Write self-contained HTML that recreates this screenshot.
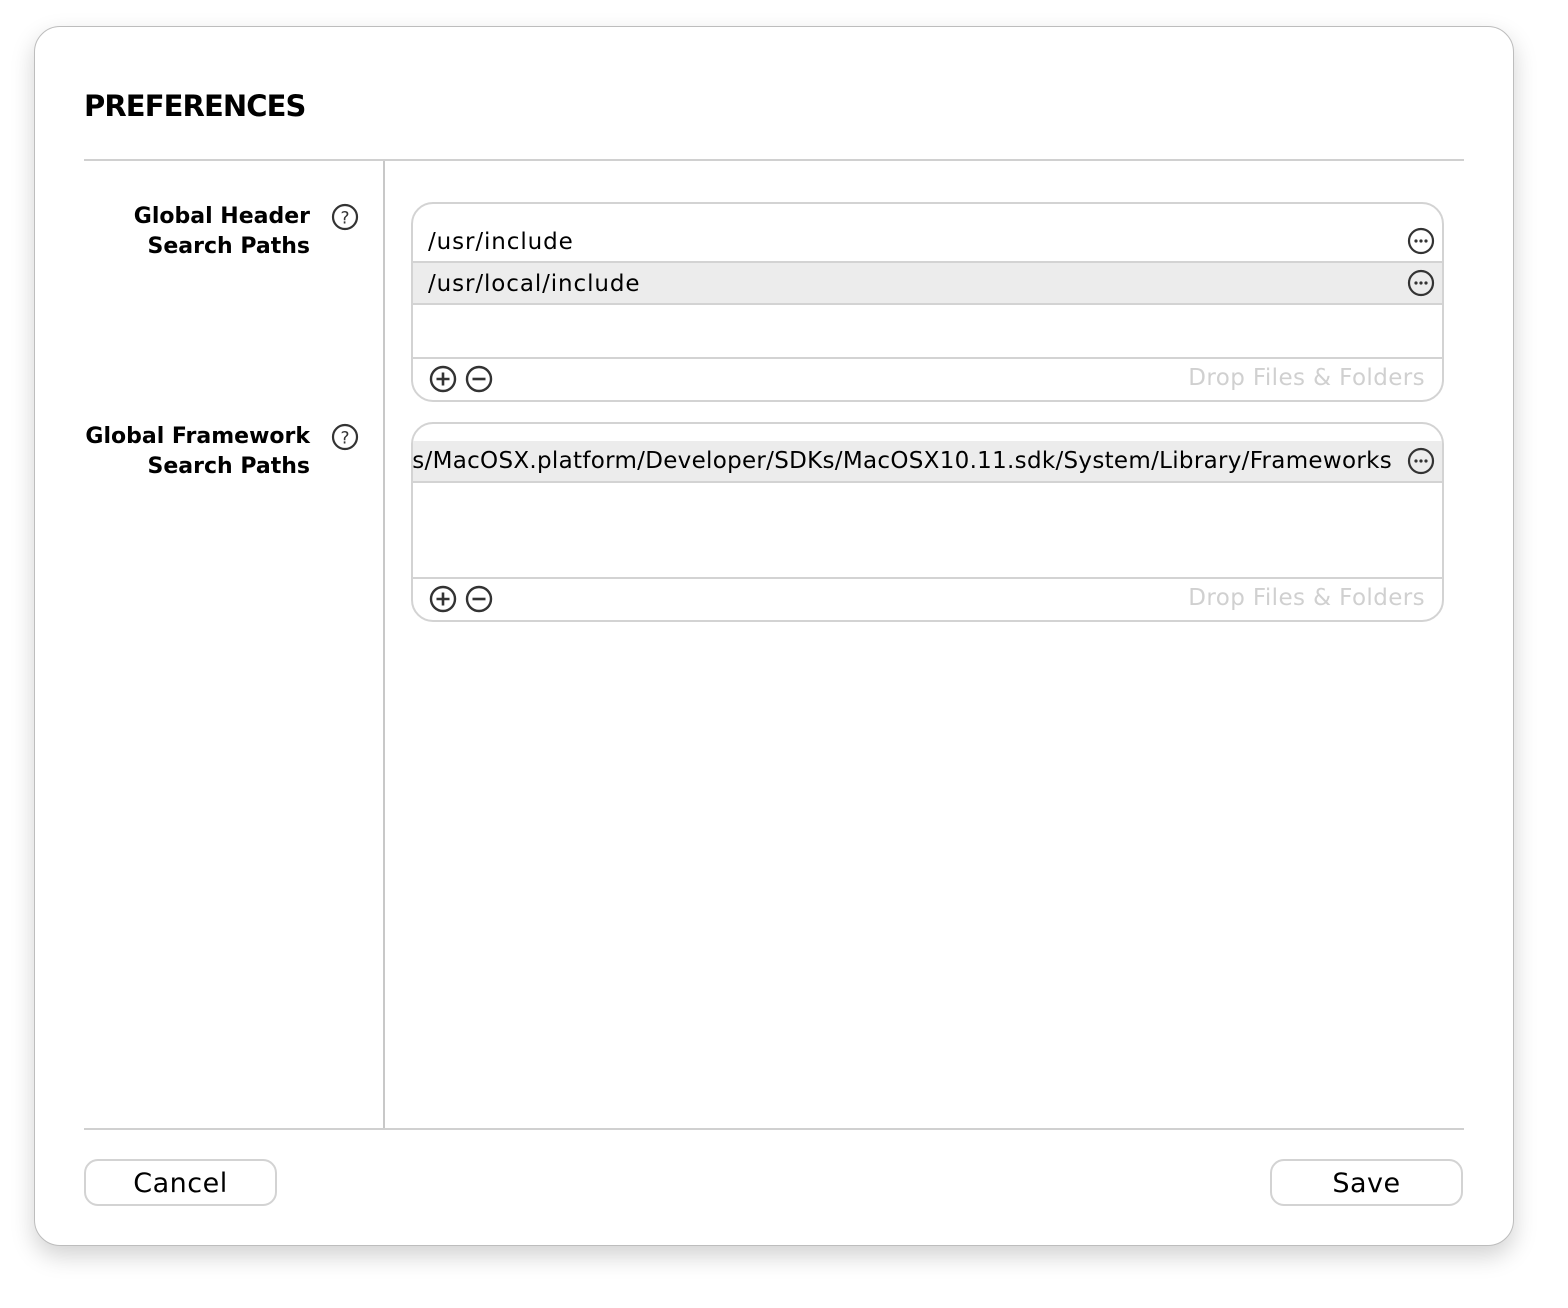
<!DOCTYPE html>
<html><head><meta charset="utf-8"><style>
*{margin:0;padding:0;box-sizing:border-box}
body{width:1568px;height:1308px;background:#fff;position:relative;font-family:"DejaVu Sans","Liberation Sans",sans-serif;color:#000;overflow:hidden}
.win{position:absolute;left:34px;top:26px;width:1480px;height:1220px;border:1px solid #bdbdbd;border-radius:26px;background:#fff;box-shadow:0 10px 24px rgba(0,0,0,.18)}
.a{position:absolute}
.title{left:84px;top:89px;font-size:29px;font-weight:bold;letter-spacing:-0.9px}
.hl{height:2px;background:#d0d0d0}
.lbl{font-size:22px;font-weight:bold;text-align:right;line-height:30px;width:290px;left:20px}
.list{left:411px;width:1033px;border:2px solid #d3d3d3;border-radius:22px;overflow:hidden}
.row{position:absolute;left:0;right:0;height:42px;font-size:23px;letter-spacing:0.9px;line-height:42px;padding-left:15px;white-space:nowrap}
.sep{position:absolute;left:0;right:0;height:2px;background:#d3d3d3}
.drop{position:absolute;right:17px;font-size:23px;letter-spacing:0.4px;color:#d0d0d0}
.btn{position:absolute;top:1159px;width:193px;height:47px;border:2px solid #d3d3d3;border-radius:14px;font-size:27px;letter-spacing:0.5px;text-align:center;line-height:46px}
svg{position:absolute}
</style></head><body>
<div class="win"></div>
<div class="a title">PREFERENCES</div>
<div class="a hl" style="left:84px;top:159px;width:1380px"></div>
<div class="a" style="left:383px;top:161px;width:2px;height:968px;background:#c8c8c8"></div>
<div class="a hl" style="left:84px;top:1128px;width:1380px"></div>

<div class="a lbl" style="top:202px">Global Header<br>Search Paths</div>
<div class="a lbl" style="top:422px">Global Framework<br>Search Paths</div>
<svg style="left:331px;top:203px" width="28" height="28" viewBox="0 0 28 28"><circle cx="14" cy="14" r="12" fill="none" stroke="#333" stroke-width="2.2"/><text x="14" y="20.5" font-size="17" text-anchor="middle" fill="#333" font-family="DejaVu Sans">?</text></svg>
<svg style="left:331px;top:423px" width="28" height="28" viewBox="0 0 28 28"><circle cx="14" cy="14" r="12" fill="none" stroke="#333" stroke-width="2.2"/><text x="14" y="20.5" font-size="17" text-anchor="middle" fill="#333" font-family="DejaVu Sans">?</text></svg>

<div class="a list" style="top:202px;height:200px">
  <div class="row" style="top:17px">/usr/include</div>
  <div class="sep" style="top:57px"></div>
  <div class="row" style="top:59px;background:#ececec">/usr/local/include</div>
  <div class="sep" style="top:99px"></div>
  <div class="sep" style="top:153px"></div>
  <div class="drop" style="top:161px">Drop Files &amp; Folders</div>
</div>
<div class="a list" style="top:422px;height:200px">
  <div class="row" style="top:17px;height:40px;line-height:40px;background:#ececec;padding:0 50px 0 10px;display:flex;justify-content:flex-end;overflow:hidden;letter-spacing:0.3px">/Applications/Xcode.app/Contents/Developer/Platforms/MacOSX.platform/Developer/SDKs/MacOSX10.11.sdk/System/Library/Frameworks</div>
  <div class="sep" style="top:57px"></div>
  <div class="sep" style="top:153px"></div>
  <div class="drop" style="top:161px">Drop Files &amp; Folders</div>
</div>

<svg style="left:1407px;top:227px" width="28" height="28" viewBox="0 0 28 28"><circle cx="14" cy="14" r="12" fill="none" stroke="#333" stroke-width="2.2"/><circle cx="9" cy="14" r="1.6" fill="#333"/><circle cx="14" cy="14" r="1.6" fill="#333"/><circle cx="19" cy="14" r="1.6" fill="#333"/></svg>
<svg style="left:1407px;top:269px" width="28" height="28" viewBox="0 0 28 28"><circle cx="14" cy="14" r="12" fill="none" stroke="#333" stroke-width="2.2"/><circle cx="9" cy="14" r="1.6" fill="#333"/><circle cx="14" cy="14" r="1.6" fill="#333"/><circle cx="19" cy="14" r="1.6" fill="#333"/></svg>
<svg style="left:1407px;top:447px" width="28" height="28" viewBox="0 0 28 28"><circle cx="14" cy="14" r="12" fill="none" stroke="#333" stroke-width="2.2"/><circle cx="9" cy="14" r="1.6" fill="#333"/><circle cx="14" cy="14" r="1.6" fill="#333"/><circle cx="19" cy="14" r="1.6" fill="#333"/></svg>

<svg style="left:429px;top:365px" width="28" height="28" viewBox="0 0 28 28"><circle cx="14" cy="14" r="12" fill="none" stroke="#333" stroke-width="2.4"/><path d="M14 7.5V20.5M7.5 14H20.5" stroke="#333" stroke-width="2.6"/></svg>
<svg style="left:465px;top:365px" width="28" height="28" viewBox="0 0 28 28"><circle cx="14" cy="14" r="12" fill="none" stroke="#333" stroke-width="2.4"/><path d="M7.5 14H20.5" stroke="#333" stroke-width="2.6"/></svg>
<svg style="left:429px;top:585px" width="28" height="28" viewBox="0 0 28 28"><circle cx="14" cy="14" r="12" fill="none" stroke="#333" stroke-width="2.4"/><path d="M14 7.5V20.5M7.5 14H20.5" stroke="#333" stroke-width="2.6"/></svg>
<svg style="left:465px;top:585px" width="28" height="28" viewBox="0 0 28 28"><circle cx="14" cy="14" r="12" fill="none" stroke="#333" stroke-width="2.4"/><path d="M7.5 14H20.5" stroke="#333" stroke-width="2.6"/></svg>

<div class="btn" style="left:84px">Cancel</div>
<div class="btn" style="left:1270px">Save</div>
</body></html>
